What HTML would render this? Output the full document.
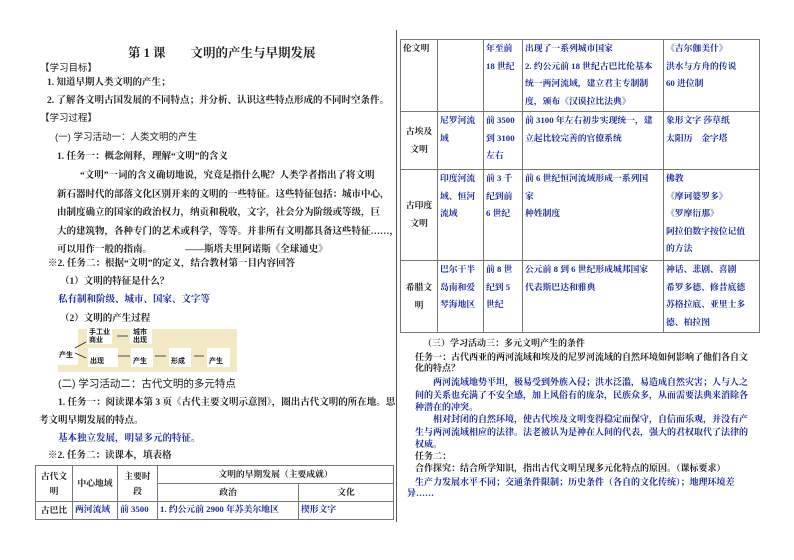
<!DOCTYPE html>
<html><head><meta charset="utf-8"><style>
body{margin:0;width:794px;height:560px;background:#fff;position:relative;overflow:hidden;font-family:"Liberation Serif","Noto Serif CJK SC",serif;color:#222;font-weight:bold}
.t{position:absolute;white-space:nowrap;font-size:9.5px;line-height:12px}
.r{font-size:9px}
.b{color:#1c2a9c}
.s{font-family:"Liberation Sans","Noto Sans CJK SC",sans-serif;font-weight:normal}
table{position:absolute;border-collapse:collapse;font-size:8.8px;table-layout:fixed}
td{border:1px solid #777;padding:0 2px;vertical-align:top;line-height:17.6px;overflow:hidden}
.c{text-align:center;vertical-align:middle}
.w{position:absolute;background:#fff}
#lt td{line-height:15px}
</style></head><body>
<div style="position:absolute;left:396px;top:30px;width:1px;height:492px;background:#555"></div>
<div class="t" style="left:128px;top:46px;font-size:12.5px;line-height:14px">第 1 课　　文明的产生与早期发展</div>
<div class="t s" style="left:40px;top:63px">【学习目标】</div>
<div class="t" style="left:47px;top:77px">1. 知道早期人类文明的产生；</div>
<div class="t" style="left:47px;top:95px">2. 了解各文明古国发展的不同特点；并分析、认识这些特点形成的不同时空条件。</div>
<div class="t s" style="left:40px;top:113px">【学习过程】</div>
<div class="t s" style="left:55px;top:132px">(一) 学习活动一：人类文明的产生</div>
<div class="t" style="left:57px;top:151px">1. 任务一：概念阐释，理解“文明”的含义</div>
<div class="t" style="left:80px;top:170px">“文明”一词的含义确切地说，究竟是指什么呢？人类学者指出了将文明</div>
<div class="t" style="left:57px;top:189px">新石器时代的部落文化区别开来的文明的一些特征。这些特征包括：城市中心，</div>
<div class="t" style="left:57px;top:207px">由制度确立的国家的政治权力，纳贡和税收，文字，社会分为阶级或等级，巨</div>
<div class="t" style="left:57px;top:226px">大的建筑物，各种专门的艺术或科学，等等。并非所有文明都具备这些特征……，</div>
<div class="t" style="left:57px;top:244px">可以用作一般的指南。　　　　——斯塔夫里阿诺斯《全球通史》</div>
<div class="t" style="left:48px;top:258px">※2. 任务二：根据“文明”的定义，结合教材第一目内容回答</div>
<div class="t" style="left:60px;top:276px">（1）文明的特征是什么？</div>
<div class="t b" style="left:58px;top:294px">私有制和阶级、城市、国家、文字等</div>
<div class="t" style="left:60px;top:313px">（2）文明的产生过程</div>
<div style="position:absolute;left:58px;top:329px;width:179px;height:43px;background:#f3e8c4"></div>
<div class="w" style="left:58px;top:329px;width:20px;height:36px"></div>
<div class="w" style="left:87px;top:329px;width:25px;height:15px"></div>
<div class="w" style="left:130px;top:329px;width:22px;height:15px"></div>
<div class="w" style="left:88px;top:348px;width:30px;height:19px"></div>
<div class="w" style="left:131px;top:348px;width:22px;height:19px"></div>
<div class="w" style="left:169px;top:348px;width:22px;height:19px"></div>
<div class="w" style="left:207px;top:348px;width:23px;height:19px"></div>
<div class="t s" style="left:89px;top:329px;font-size:7px;line-height:8px;font-weight:bold">手工业<br>商业</div>
<div class="t s" style="left:133px;top:329px;font-size:7px;line-height:8px;font-weight:bold">城市<br>出现</div>
<div class="t s" style="left:59px;top:350px;font-size:7px;font-weight:bold">产生</div>
<div class="t s" style="left:90px;top:356px;font-size:7px;font-weight:bold">出现</div>
<div class="t s" style="left:133px;top:356px;font-size:7px;font-weight:bold">产生</div>
<div class="t s" style="left:171px;top:356px;font-size:7px;font-weight:bold">形成</div>
<div class="t s" style="left:209px;top:356px;font-size:7px;font-weight:bold">产生</div>
<svg style="position:absolute;left:58px;top:329px" width="179" height="43"><g stroke="#222" stroke-width="0.8" fill="none"><path d="M17 19 L28 13"/><path d="M17 24 L28 29"/><path d="M59 7 L70 7"/><path d="M60 27 L72 27"/><path d="M97 27 L108 27"/><path d="M136 27 L146 27"/></g></svg>
<div class="t s" style="left:58px;top:378px;font-size:10.5px">(二) 学习活动二：古代文明的多元特点</div>
<div class="t" style="left:58px;top:397px">1. 任务一：阅读课本第 3 页《古代主要文明示意图》，圈出古代文明的所在地。思</div>
<div class="t" style="left:39px;top:415px">考文明早期发展的特点。</div>
<div class="t b" style="left:58px;top:433px">基本独立发展，明显多元的特征。</div>
<div class="t" style="left:48px;top:450px">※2. 任务二：读课本，填表格</div>
<table id="lt" style="left:35px;top:465px;width:358px">
<col style="width:37px"><col style="width:45px"><col style="width:40px"><col style="width:141px"><col style="width:95px">
<tr style="height:18px"><td class="c" rowspan="2">古代文<br>明</td><td class="c" rowspan="2">中心地域</td><td class="c" rowspan="2">主要时<br>段</td><td class="c" colspan="2">文明的早期发展（主要成就）</td></tr>
<tr style="height:18px"><td class="c">政治</td><td class="c">文化</td></tr>
<tr style="height:18px"><td class="c">古巴比</td><td class="b">两河流域</td><td class="b">前 3500</td><td class="b">1. 约公元前 2900 年苏美尔地区</td><td class="b">楔形文字</td></tr>
</table>
<table style="left:400px;top:39px;width:359px">
<col style="width:37px"><col style="width:46px"><col style="width:39px"><col style="width:141px"><col style="width:96px">
<tr style="height:72px"><td>伦文明</td><td></td><td class="b">年至前<br>18 世纪</td><td class="b">出现了一系列城市国家<br>2. 约公元前 18 世纪古巴比伦基本<br>统一两河流域，建立君主专制制<br>度，颁布《汉谟拉比法典》</td><td class="b">《吉尔伽美什》<br>洪水与方舟的传说<br>60 进位制</td></tr>
<tr style="height:58px"><td class="c">古埃及<br>文明</td><td class="b">尼罗河流<br>域</td><td class="b">前 3500<br>到 3100<br>左右</td><td class="b">前 3100 年左右初步实现统一，建<br>立起比较完善的官僚系统</td><td class="b">象形文字 莎草纸<br>太阳历　金字塔</td></tr>
<tr style="height:91px"><td class="c">古印度<br>文明</td><td class="b">印度河流<br>域、恒河<br>流域</td><td class="b">前 3 千<br>纪到前<br>6 世纪</td><td class="b">前 6 世纪恒河流域形成一系列国<br>家<br>种姓制度</td><td class="b">佛教<br>《摩诃婆罗多》<br>《罗摩衍那》<br>阿拉伯数字按位记值<br>的方法</td></tr>
<tr style="height:72px"><td class="c">希腊文<br>明</td><td class="b">巴尔干半<br>岛南和爱<br>琴海地区</td><td class="b">前 8 世<br>纪到 5<br>世纪</td><td class="b">公元前 8 到 6 世纪形成城邦国家<br>代表斯巴达和雅典</td><td class="b">神话、悲剧、喜剧<br>希罗多德、修昔底德<br>苏格拉底、亚里士多<br>德、柏拉图</td></tr>
</table>
<div class="t r" style="left:423px;top:337px">（三）学习活动三：多元文明产生的条件</div>
<div class="t r" style="left:415px;top:351px">任务一：古代西亚的两河流域和埃及的尼罗河流域的自然环境如何影响了他们各自文</div>
<div class="t r" style="left:415px;top:362px">化的特点？</div>
<div class="t r b" style="left:433px;top:376px">两河流域地势平坦，极易受到外族入侵；洪水泛滥，易造成自然灾害；人与人之</div>
<div class="t r b" style="left:415px;top:389px">间的关系也充满了不安全感，加上风俗有的庞杂，民族众多，从而需要法典来消除各</div>
<div class="t r b" style="left:415px;top:401px">种潜在的冲突。</div>
<div class="t r b" style="left:433px;top:413px">相对封闭的自然环境，使古代埃及文明变得稳定而保守，自信而乐观，并没有产</div>
<div class="t r b" style="left:415px;top:426px">生与两河流域相应的法律。法老被认为是神在人间的代表，强大的君权取代了法律的</div>
<div class="t r b" style="left:415px;top:438px">权威。</div>
<div class="t r" style="left:415px;top:450px">任务二：</div>
<div class="t r" style="left:415px;top:462px">合作探究：结合所学知识，指出古代文明呈现多元化特点的原因。（课标要求）</div>
<div class="t r b" style="left:415px;top:476px">生产力发展水平不同；交通条件限制；历史条件（各自的文化传统）；地理环境差</div>
<div class="t r b" style="left:407px;top:487px">异……</div>
</body></html>
